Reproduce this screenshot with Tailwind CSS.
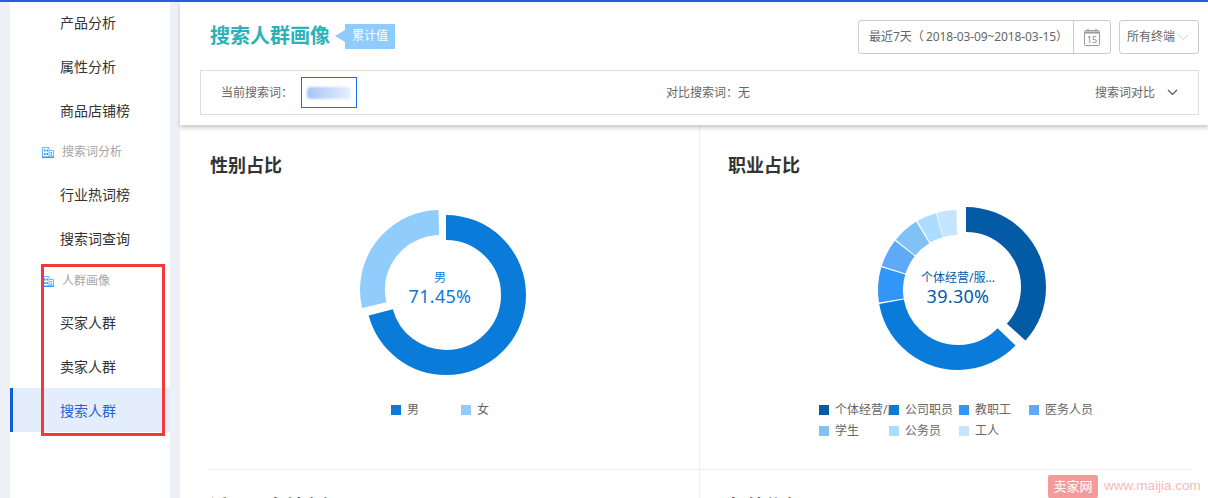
<!DOCTYPE html>
<html lang="zh-CN">
<head>
    <meta charset="UTF-8">
    <title>搜索人群画像</title>
    <script src="https://cdn.jsdelivr.net/npm/@tailwindcss/browser@4"></script>
</head>
<body class="relative h-[498px] w-[1208px] overflow-hidden bg-white text-[#333] font-['Noto_Sans','Noto_Sans_CJK_SC',sans-serif]">

    <div class="flex h-full flex-col">
        <div class="h-[2px] bg-[#1f5fe0]"></div>

        <div class="flex min-h-0 flex-1 bg-[#edf0f6] pl-[10px]">
            <!-- sidebar -->
            <aside class="w-[160px] shrink-0 bg-white text-sm text-[#333]">
                <div class="-mt-px">
                    <a class="flex h-[44px] items-center pl-[50px]">产品分析</a>
                    <a class="flex h-[44px] items-center pl-[50px]">属性分析</a>
                    <a class="flex h-[44px] items-center pl-[50px]">商品店铺榜</a>
                    <div class="flex h-[40px] items-center gap-[8px] pb-[2px] pl-[32px] text-xs text-[#a6a6a6]">
                        <svg class="h-[12px] w-[12px]" viewBox="0 0 12 12"><path fill="none" stroke="#6db6f8" d="M.5 11.500V1.500h6.500v10M7 4.500h4.500v7"/><path fill="#2f97f7" d="M0 10.500h12V12H0zM2 3.500h1.500v2H2zm2.500 0H6v2H4.500zM2 7h1.500v2H2zm2.500 0H6v2H4.500zM8.500 6H10v1.500H8.500zm0 2.500H10V10H8.500z"/></svg>
                        <span>搜索词分析</span>
                    </div>
                    <a class="flex h-[44px] items-center pl-[50px]">行业热词榜</a>
                    <a class="flex h-[44px] items-center pl-[50px]">搜索词查询</a>
                    <div class="flex h-[40px] items-center gap-[8px] pl-[32px] text-xs text-[#a6a6a6]">
                        <svg class="h-[12px] w-[12px]" viewBox="0 0 12 12"><path fill="none" stroke="#6db6f8" d="M.5 11.500V1.500h6.500v10M7 4.500h4.500v7"/><path fill="#2f97f7" d="M0 10.500h12V12H0zM2 3.500h1.500v2H2zm2.500 0H6v2H4.500zM2 7h1.500v2H2zm2.500 0H6v2H4.500zM8.500 6H10v1.500H8.500zm0 2.500H10V10H8.500z"/></svg>
                        <span>人群画像</span>
                    </div>
                    <a class="flex h-[44px] items-center pl-[50px]">买家人群</a>
                    <a class="flex h-[43px] items-center pt-px pl-[50px]">卖家人群</a>
                    <a class="flex h-[44px] items-center border-l-[3px] border-[#0a5fe0] bg-[#e4edfc] pt-[2px] pl-[47px] text-[#2b5fe0]">搜索人群</a>
                </div>
            </aside>

            <main class="ml-[10px] flex min-w-0 flex-1 flex-col bg-white">
                <!-- header -->
                <header class="relative z-10 h-[123px] shrink-0 bg-white px-[20px] shadow-[0_3px_4px_rgba(0,0,0,0.2)]">
                    <div class="flex h-[68px] items-start justify-between">
                        <div class="flex items-center pt-[20px] pl-[10px]">
                            <h1 class="text-xl leading-[28px] font-bold text-[#2bb1b9]">搜索人群画像</h1>
                            <span class="ml-[5px] h-0 w-0 border-y-[6px] border-r-[10px] border-y-transparent border-r-[#8fcbfc]"></span>
                            <span class="flex h-[25px] w-[50px] items-center justify-center bg-[#8fcbfc] text-xs text-white">累计值</span>
                        </div>
                        <div class="mr-[-11px] flex items-center gap-[8px] pt-[18px] text-xs text-[#666]">
                            <div class="flex h-[34px] w-[253px] items-center rounded-[3px] border border-[#ccc]">
                                <span class="flex-1 pl-[10px] whitespace-nowrap">最近7天（<span class="ml-[2px] tracking-[-0.1px]">2018-03-09~2018-03-15</span>）</span>
                                <span class="flex h-full w-[37px] items-center justify-center border-l border-[#ccc]">
                                    <svg class="h-[18px] w-[16px]" viewBox="0 0 16 18" fill="none" stroke="#999"><rect x=".5" y="2.500" width="15" height="15" rx="1"/><path stroke-width="2" d="M1 4.500h14"/><path d="M4 .5v3M12 .5v3"/><text x="8" y="15" text-anchor="middle" font-size="9" fill="#888" stroke="none">15</text></svg>
                                </span>
                            </div>
                            <div class="flex h-[34px] w-[80px] items-center justify-between rounded-[3px] border border-[#ccc] pr-[9px] pl-[7px]">
                                <span>所有终端</span>
                                <svg class="h-[7px] w-[11px]" viewBox="0 0 11 7" fill="none" stroke="#ccc"><path d="M1 1l4.500 4.500L10 1"/></svg>
                            </div>
                        </div>
                    </div>
                    <div class="mr-[-11px] flex h-[45px] items-center border border-[#ddd] px-[20px] text-xs text-[#666]">
                        <span class="w-[80px]">当前搜索词：</span>
                        <span class="flex h-[31px] w-[56px] items-center justify-center border border-[#1a73e8]">
                            <span class="h-[12px] w-[44px] rounded-sm bg-linear-to-r from-[#a6c4f7] to-[#e8f0fd] blur-[1px]"></span>
                        </span>
                        <span class="ml-[309px]">对比搜索词：无</span>
                        <span class="ml-auto">搜索词对比</span>
                        <svg class="ml-[12px] h-[7px] w-[11px]" viewBox="0 0 11 7" fill="none" stroke="#555" stroke-width="1.200"><path d="M1 1l4.500 4.500L10 1"/></svg>
                    </div>
                </header>

                <!-- charts -->
                <div class="ml-[30px] mr-[18px] min-h-0 flex-1">
                    <div class="flex h-[345px] border-b border-[#eee]">
                        <section class="w-[490px] shrink-0 border-r border-[#eee] pt-[28px]">
                            <h2 class="text-lg leading-[24px] font-bold text-[#333]">性别占比</h2>
                            <div class="relative mt-[13px] ml-[130px] h-[200px] w-[200px]">
                                <svg class="h-[200px] w-[200px] overflow-visible" viewBox="0 0 200 200" fill="none" stroke-width="25">
                                    <circle cx="106" cy="105" r="67.500" pathLength="360" stroke="#0a7bd9" stroke-dasharray="255 105" transform="rotate(-90 106 105)"/>
                                    <circle cx="100" cy="100" r="67.500" pathLength="360" stroke="#90cdfc" stroke-dasharray="102 258" transform="rotate(167 100 100)"/>
                                </svg>
                                <div class="absolute inset-x-0 top-[79px] text-center">
                                    <p class="text-xs leading-[18px] text-[#0a7bd9]">男</p>
                                    <p class="text-lg leading-[18px] tracking-[0.3px] text-[#0a7bd9]">71.45%</p>
                                </div>
                            </div>
                            <ul class="mt-[10px] ml-[181px] flex text-xs leading-[20px] text-[#666]">
                                <li class="flex w-[70px] items-center gap-[6px]"><i class="h-[10px] w-[10px] bg-[#0a7bd9]"></i>男</li>
                                <li class="flex w-[70px] items-center gap-[6px]"><i class="h-[10px] w-[10px] bg-[#90cdfc]"></i>女</li>
                            </ul>
                        </section>
                        <section class="flex-1 pt-[28px] pl-[28px]">
                            <h2 class="text-lg leading-[24px] font-bold text-[#333]">职业占比</h2>
                            <div class="relative mt-[13px] ml-[130px] h-[200px] w-[200px]">
                                <svg class="h-[200px] w-[200px] overflow-visible" viewBox="0 0 200 200" fill="none" stroke-width="25">
                                    <circle cx="108" cy="97" r="67.500" pathLength="360" stroke="#045ba5" stroke-dasharray="132 228" transform="rotate(-90 108 97)"/>
                                    <circle cx="100" cy="100" r="67.500" pathLength="360" stroke="#0a7bd9" stroke-dasharray="126 234" transform="rotate(44 100 100)"/>
                                    <circle cx="100" cy="100" r="67.500" pathLength="360" stroke="#3196f7" stroke-dasharray="25.500 334.500" transform="rotate(171 100 100)"/>
                                    <circle cx="100" cy="100" r="67.500" pathLength="360" stroke="#60a9f9" stroke-dasharray="20.500 339.500" transform="rotate(197.500 100 100)"/>
                                    <circle cx="100" cy="100" r="67.500" pathLength="360" stroke="#80c2f5" stroke-dasharray="19.500 340.500" transform="rotate(219 100 100)"/>
                                    <circle cx="100" cy="100" r="67.500" pathLength="360" stroke="#acdcff" stroke-dasharray="14.500 345.500" transform="rotate(239.500 100 100)"/>
                                    <circle cx="100" cy="100" r="67.500" pathLength="360" stroke="#c5e5ff" stroke-dasharray="14.500 345.500" transform="rotate(254.500 100 100)"/>
                                </svg>
                                <div class="absolute inset-x-0 top-[79px] text-center">
                                    <p class="text-xs leading-[18px] text-[#045ba5]">个体经营/服...</p>
                                    <p class="text-lg leading-[18px] tracking-[0.3px] text-[#045ba5]">39.30%</p>
                                </div>
                            </div>
                            <ul class="mt-[9px] ml-[91px] grid w-[280px] grid-cols-4 text-xs leading-[21px] text-[#666]">
                                <li class="flex items-center gap-[6px]"><i class="h-[10px] w-[10px] shrink-0 bg-[#045ba5]"></i><span class="w-[54px] overflow-hidden whitespace-nowrap">个体经营/服务</span></li>
                                <li class="flex items-center gap-[6px]"><i class="h-[10px] w-[10px] shrink-0 bg-[#0a7bd9]"></i>公司职员</li>
                                <li class="flex items-center gap-[6px]"><i class="h-[10px] w-[10px] shrink-0 bg-[#3196f7]"></i>教职工</li>
                                <li class="flex items-center gap-[6px]"><i class="h-[10px] w-[10px] shrink-0 bg-[#60a9f9]"></i>医务人员</li>
                                <li class="flex items-center gap-[6px]"><i class="h-[10px] w-[10px] shrink-0 bg-[#80c2f5]"></i>学生</li>
                                <li class="flex items-center gap-[6px]"><i class="h-[10px] w-[10px] shrink-0 bg-[#acdcff]"></i>公务员</li>
                                <li class="flex items-center gap-[6px]"><i class="h-[10px] w-[10px] shrink-0 bg-[#c5e5ff]"></i>工人</li>
                            </ul>
                        </section>
                    </div>
                    <div class="flex">
                        <section class="h-[60px] w-[490px] shrink-0 border-r border-[#eee] pt-[24px]">
                            <h2 class="text-lg leading-[24px] font-bold text-[#333]">近30天支付金额</h2>
                        </section>
                        <section class="flex-1 pt-[24px] pl-[28px]">
                            <h2 class="text-lg leading-[24px] font-bold text-[#333]">年龄分布</h2>
                        </section>
                    </div>
                </div>
            </main>
        </div>
    </div>

    <!-- annotation + watermark sit over the page -->
    <div class="absolute top-[264px] left-[41px] h-[172px] w-[124px] border-[3px] border-[#f33a3a]"></div>
    <div class="absolute top-[475px] left-[1048px] flex h-[23px] items-center gap-[6px]">
        <span class="flex h-full w-[50px] items-center justify-center rounded-[2px] bg-[#f59a9a] text-[13px] text-white">卖家网</span>
        <span class="text-[13.500px] font-['Liberation_Sans',sans-serif] text-[#f8b8b8]">www.maijia.com</span>
    </div>

</body>
</html>
